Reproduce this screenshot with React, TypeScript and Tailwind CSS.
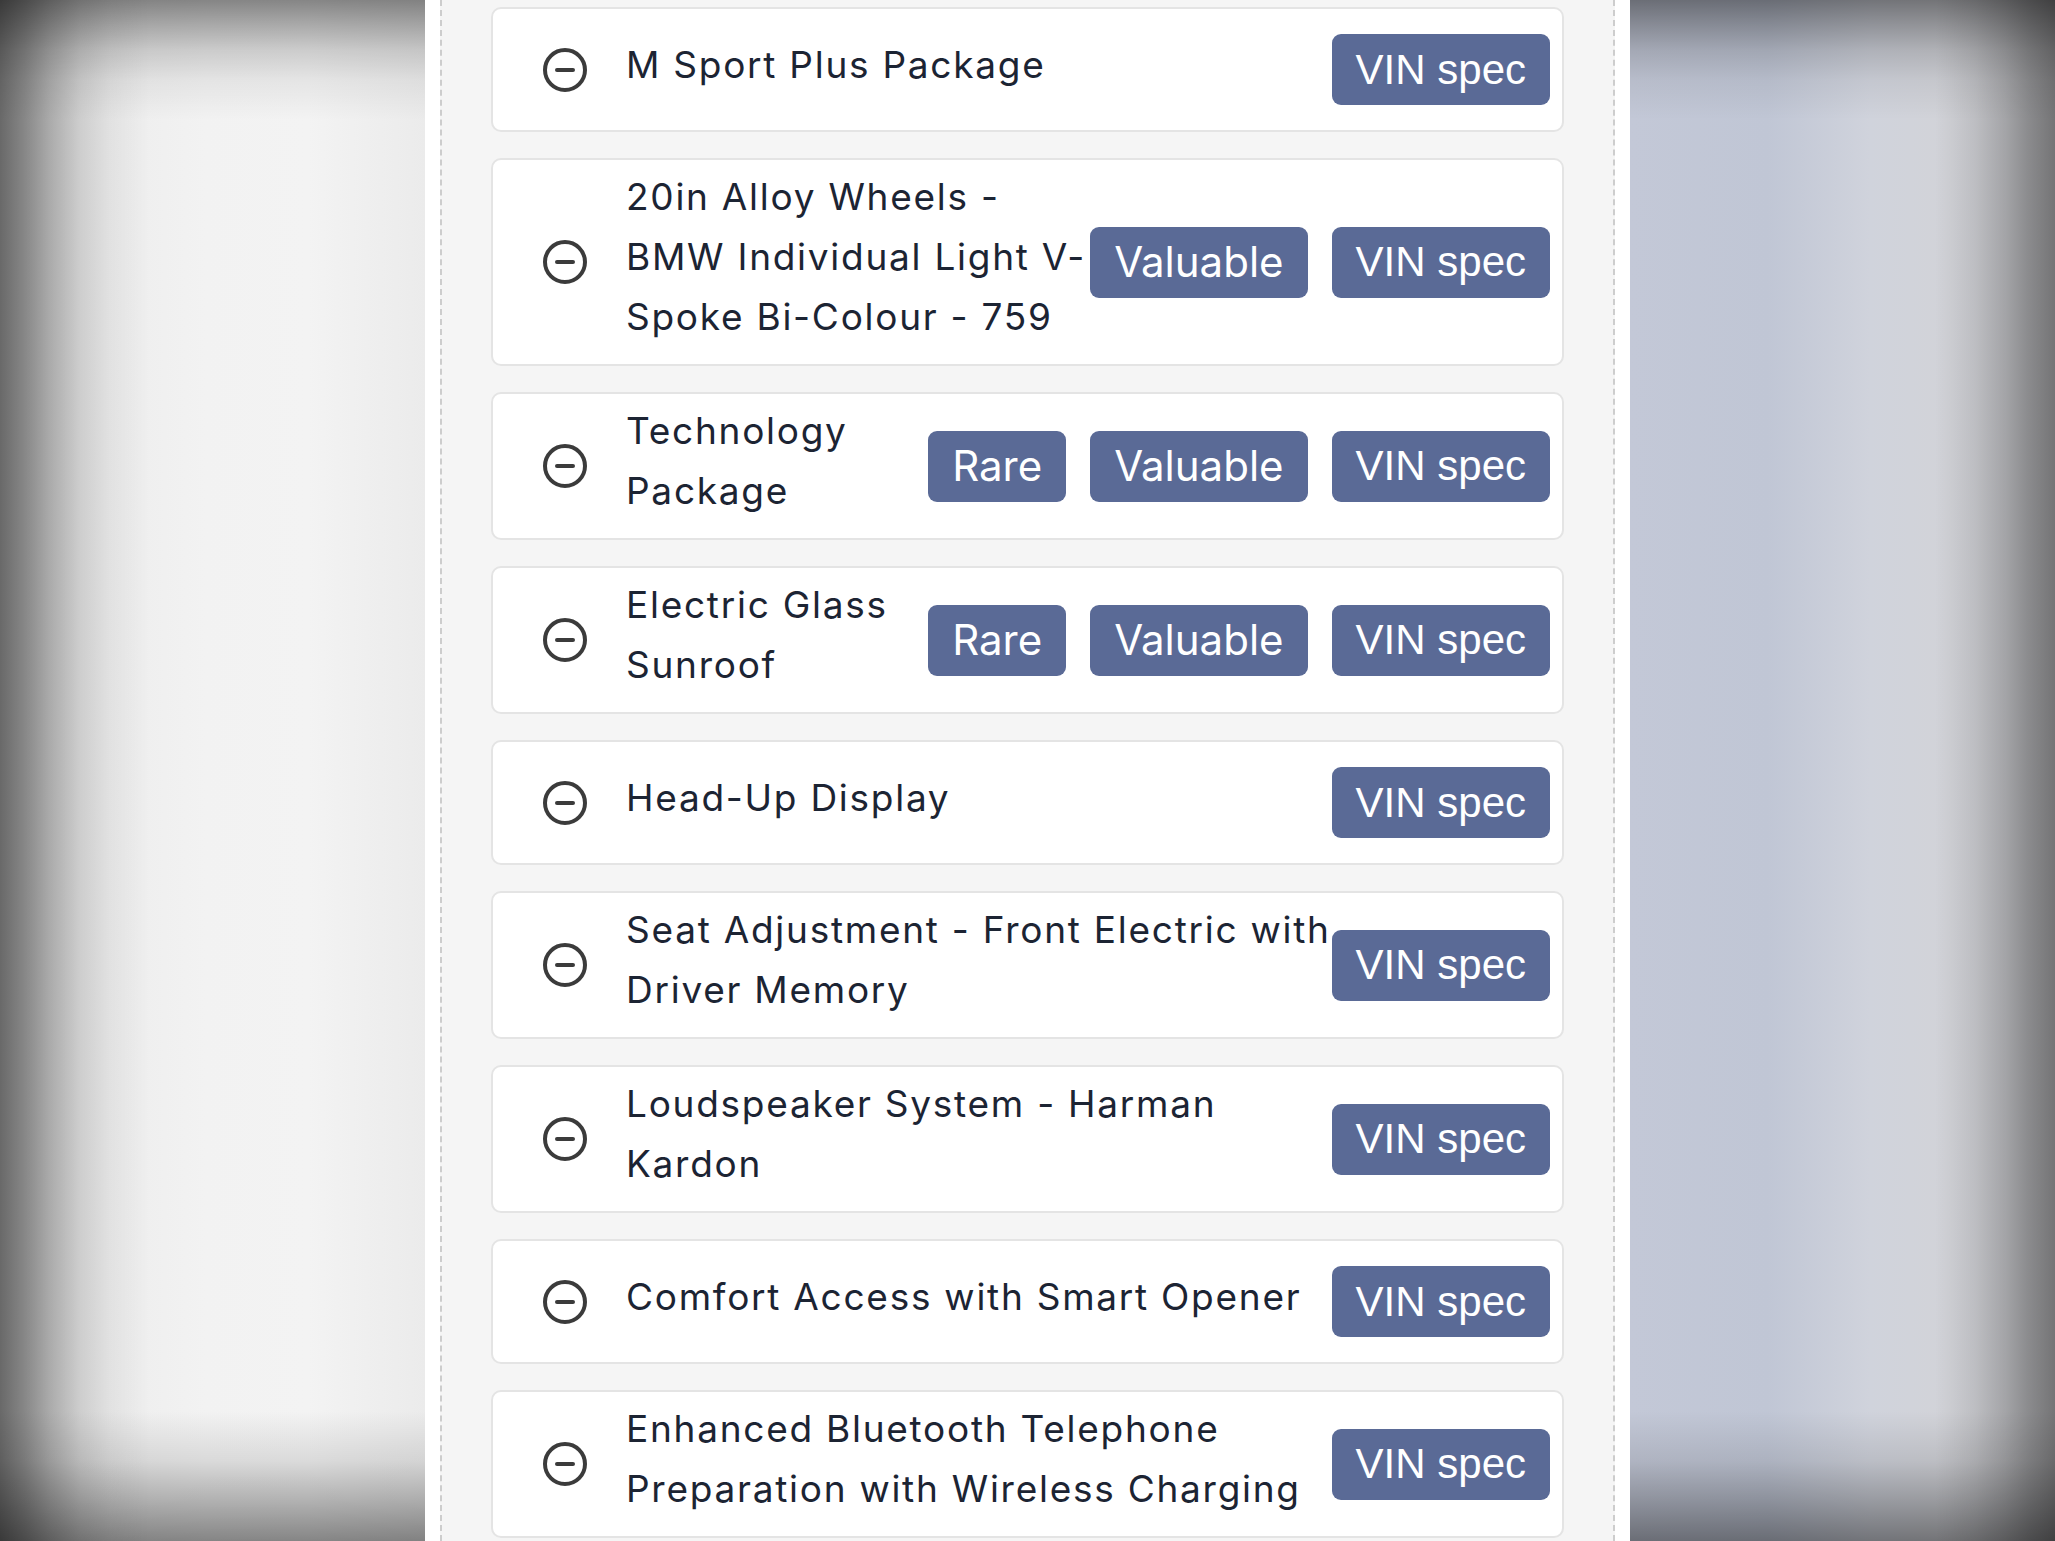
import { CircleMinus } from 'lucide-react';

type Option = { lines: string[]; tags: string[] };

const options: Option[] = [
  { lines: ['M Sport Plus Package'], tags: [] },
  { lines: ['20in Alloy Wheels -', 'BMW Individual Light V-', 'Spoke Bi-Colour - 759'], tags: ['Valuable'] },
  { lines: ['Technology', 'Package'], tags: ['Rare', 'Valuable'] },
  { lines: ['Electric Glass', 'Sunroof'], tags: ['Rare', 'Valuable'] },
  { lines: ['Head-Up Display'], tags: [] },
  { lines: ['Seat Adjustment - Front Electric with', 'Driver Memory'], tags: [] },
  { lines: ['Loudspeaker System - Harman', 'Kardon'], tags: [] },
  { lines: ['Comfort Access with Smart Opener'], tags: [] },
  { lines: ['Enhanced Bluetooth Telephone', 'Preparation with Wireless Charging'], tags: [] },
];

function Tag({ label, vin }: { label: string; vin?: boolean }) {
  return (
    <span
      className={`flex h-[71px] items-center rounded-[9px] bg-[#5a6a96] px-6 text-[42px] leading-none text-white ${
        vin ? "font-['Liberation_Sans',Arial,sans-serif]" : "font-['Inter',sans-serif]"
      }`}
    >
      {label}
    </span>
  );
}

function OptionRow({ option }: { option: Option }) {
  return (
    <div className="flex items-center rounded-[10px] border-2 border-[#e4e4e4] bg-white py-3 pl-12 pr-3">
      <CircleMinus size={48} strokeWidth={2} className="shrink-0 text-[#3b3b3b]" />
      {/* nudge up a few px: Inter sits lower in its line box than the original face */}
      <div className="relative -top-[5px] ml-[37px] min-w-0 flex-1 font-['Inter',sans-serif] text-[37px] leading-[60px] tracking-[0.047em] text-[#1c2433]">
        {option.lines.map((line) => (
          <div key={line} className="whitespace-nowrap">
            {line}
          </div>
        ))}
      </div>
      <div className="my-[13px] flex shrink-0 gap-6">
        {option.tags.map((t) => (
          <Tag key={t} label={t} />
        ))}
        <Tag label="VIN spec" vin />
      </div>
    </div>
  );
}

export default function App() {
  return (
    <div className="flex h-screen justify-center overflow-hidden bg-[linear-gradient(to_right,rgba(0,0,0,0.55)_0px,rgba(0,0,0,0.42)_25px,rgba(0,0,0,0.27)_50px,rgba(0,0,0,0.13)_80px,rgba(0,0,0,0.05)_110px,transparent_150px),linear-gradient(to_left,rgba(0,0,0,0.42)_0px,rgba(0,0,0,0.32)_25px,rgba(0,0,0,0.2)_50px,rgba(0,0,0,0.09)_80px,transparent_120px),linear-gradient(to_bottom,rgba(0,0,0,0.45)_0px,rgba(0,0,0,0.3)_25px,rgba(0,0,0,0.16)_50px,rgba(0,0,0,0.06)_80px,transparent_120px),linear-gradient(to_top,rgba(0,0,0,0.45)_0px,rgba(0,0,0,0.27)_40px,rgba(0,0,0,0.1)_80px,transparent_130px),linear-gradient(to_right,#e8e8e8_0%,#f2f2f2_10%,#f3f3f3_15%,#ebebeb_20.7%,#c3c8d7_79.3%,#c0c6d5_86%,#d0d3dc_91%,#d2d3d8_95%,#c8c8cb_100%)]">
      <div className="h-full w-[1205px] shrink-0 bg-white px-[15px]">
        <div className="flex h-full flex-col gap-[26px] border-x-2 border-dashed border-[#cdcdcd] bg-[#f5f5f5] px-[49px] pt-[7px]">
          {options.map((o) => (
            <OptionRow key={o.lines.join(' ')} option={o} />
          ))}
        </div>
      </div>
    </div>
  );
}
